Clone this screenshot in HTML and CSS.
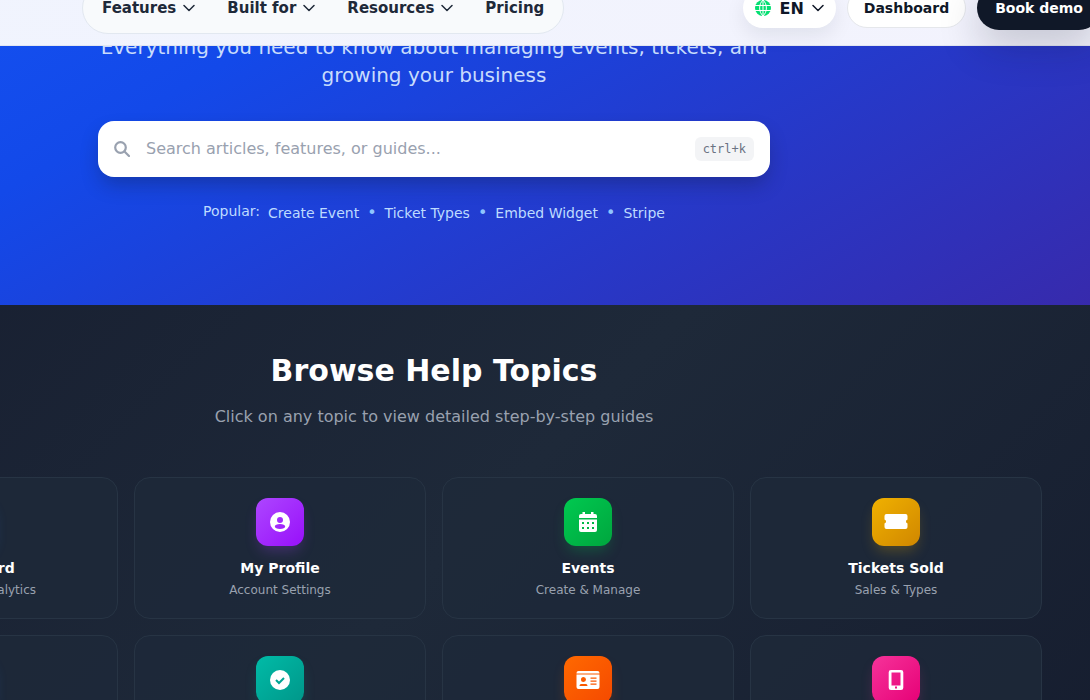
FILE: index.html
```html
<!DOCTYPE html>
<html lang="en">
<head>
    <meta charset="UTF-8">
    <meta name="viewport" content="width=device-width, initial-scale=1.0">
    <title>Help Center</title>
    <link rel="stylesheet" href="styles.css">
</head>
<body>
    <div class="page">
        <header class="header">
            <nav class="nav">
                <button type="button" class="nav-item">Features
                    <svg class="chevron" viewBox="0 0 12 12"><path d="M1 3.5l5 5 5-5"/></svg>
                </button>
                <button type="button" class="nav-item">Built for
                    <svg class="chevron" viewBox="0 0 12 12"><path d="M1 3.5l5 5 5-5"/></svg>
                </button>
                <button type="button" class="nav-item">Resources
                    <svg class="chevron" viewBox="0 0 12 12"><path d="M1 3.5l5 5 5-5"/></svg>
                </button>
                <a href="#" class="nav-item">Pricing</a>
            </nav>
            <div class="actions">
                <button type="button" class="lang-button">
                    <svg class="globe" viewBox="0 0 16 16">
                        <circle cx="8" cy="8" r="8" fill="#05df72"/>
                        <path d="M8 0v16M0 5.500h16M0 10.500h16M8 0C3.500 4 3.500 12 8 16M8 0c4.500 4 4.500 12 0 16" fill="none" stroke="#fff"/>
                    </svg>
                    EN
                    <svg class="chevron" viewBox="0 0 12 12"><path d="M1 3.500l5 5 5-5"/></svg>
                </button>
                <a href="#" class="dashboard-link">Dashboard</a>
                <a href="#" class="demo-link">Book demo</a>
            </div>
        </header>

        <section class="hero">
            <div class="hero-content">
                <p class="hero-text">Everything you need to know about managing events, tickets, and growing your business</p>
                <div class="search">
                    <svg class="search-icon" viewBox="0 0 16 16"><circle cx="6.500" cy="6.500" r="5.300"/><path d="M10.500 10.500l4.500 4.500"/></svg>
                    <input type="text" class="search-input" aria-label="Search" placeholder="Search articles, features, or guides...">
                    <kbd class="shortcut">ctrl+k</kbd>
                </div>
                <div class="popular">
                    <span class="popular-label">Popular:</span>
                    <div class="popular-links">
                        <a href="#">Create Event</a>
                        <span class="dot">•</span>
                        <a href="#">Ticket Types</a>
                        <span class="dot">•</span>
                        <a href="#">Embed Widget</a>
                        <span class="dot">•</span>
                        <a href="#">Stripe</a>
                    </div>
                </div>
            </div>
        </section>

        <section class="topics">
            <div class="container">
                <h2>Browse Help Topics</h2>
                <p class="topics-text">Click on any topic to view detailed step-by-step guides</p>
                <div class="grid">
                    <button type="button" class="card">
                        <span class="icon blue"></span>
                        <span class="card-title">Dashboard</span>
                        <span class="card-text">Overview &amp; Analytics</span>
                    </button>
                    <button type="button" class="card">
                        <span class="icon purple">
                            <svg viewBox="0 0 24 24"><path fill-rule="evenodd" d="M12 2a10 10 0 1 0 0 20 10 10 0 0 0 0-20zM12 7a3 3 0 1 1 0 6 3 3 0 0 1 0-6zM12 14c3 0 5.200 1 5.200 2.500S15 19 12 19s-5.200-1-5.200-2.500S9 14 12 14z"/></svg>
                        </span>
                        <span class="card-title">My Profile</span>
                        <span class="card-text">Account Settings</span>
                    </button>
                    <button type="button" class="card">
                        <span class="icon green">
                            <svg viewBox="0 0 24 24"><path fill-rule="evenodd" d="M6.500 2h2.500v2h6V2h2.500v2H19a2 2 0 0 1 2 2v2H3V6a2 2 0 0 1 2-2h1.500zM3 9.500h18V20a2 2 0 0 1-2 2H5a2 2 0 0 1-2-2zM6 12v2h2v-2zM11 12v2h2v-2zM16 12v2h2v-2zM6 17v2h2v-2zM11 17v2h2v-2zM16 17v2h2v-2z"/></svg>
                        </span>
                        <span class="card-title">Events</span>
                        <span class="card-text">Create &amp; Manage</span>
                    </button>
                    <button type="button" class="card">
                        <span class="icon yellow">
                            <svg viewBox="0 0 24 24"><path d="M2.500 4h19A2 2 0 0 1 23.500 6v3.500c-1 .5-1.500 1-1.500 2s.5 1.500 1.500 2V17a2 2 0 0 1-2 2h-19a2 2 0 0 1-2-2v-3.500c1-.5 1.500-1 1.500-2s-.5-1.500-1.500-2V6a2 2 0 0 1 2-2z"/></svg>
                        </span>
                        <span class="card-title">Tickets Sold</span>
                        <span class="card-text">Sales &amp; Types</span>
                    </button>
                    <button type="button" class="card" aria-label="Topic">
                        <span class="icon blue"></span>
                    </button>
                    <button type="button" class="card" aria-label="Check-in">
                        <span class="icon teal">
                            <svg viewBox="0 0 24 24"><circle cx="12" cy="12" r="10"/><path class="tick" d="M8 12l3 3 5-5"/></svg>
                        </span>
                    </button>
                    <button type="button" class="card" aria-label="Badges">
                        <span class="icon orange">
                            <svg viewBox="0 0 24 24"><path fill-rule="evenodd" d="M2.500 3h19a2 2 0 0 1 2 2v.5H.5V5a2 2 0 0 1 2-2zM.5 6.500h23V19a2 2 0 0 1-2 2h-19a2 2 0 0 1-2-2zM7.500 9a2.500 2.500 0 1 0 0 5 2.500 2.500 0 0 0 0-5zM3.500 18h8c0-1.500-1-2-2-2h-4c-1 0-2 .5-2 2zM14.500 9.500v1.200h6V9.500zM14.500 12.500v1.200h6v-1.200zM14.500 15.500v1.200h6v-1.200z"/></svg>
                        </span>
                    </button>
                    <button type="button" class="card" aria-label="Mobile">
                        <span class="icon pink">
                            <svg viewBox="0 0 24 24"><path fill-rule="evenodd" d="M7 2h10a2.300 2.300 0 0 1 2.300 2.300v15.400a2.300 2.300 0 0 1-2.300 2.300H7a2.300 2.300 0 0 1-2.300-2.300V4.300A2.300 2.300 0 0 1 7 2zM7.500 4.500v13h9v-13zM11 18.500v2h2v-2z"/></svg>
                        </span>
                    </button>
                </div>
            </div>
        </section>
    </div>
</body>
</html>
```
FILE: styles.css
```css
* {
    box-sizing: border-box;
}
body {
    margin: 0;
    height: 100vh;
    overflow: hidden;
    font-family: "DejaVu Sans", sans-serif;
    background-color: #1a2133;
}
a {
    color: inherit;
    text-decoration: none;
}
button {
    font-family: inherit;
    cursor: pointer;
}
h2, p {
    margin: 0;
}
.page {
    position: relative;
    width: calc(100% + 310px);
    margin: -30px 0 0 -266px;
}

/* Header */
.header {
    position: absolute;
    z-index: 10;
    top: 0;
    left: 0;
    right: 0;
    display: flex;
    align-items: center;
    justify-content: space-between;
    padding: 12px 33px 11px 348px;
    background: linear-gradient(to right, #f0f4fe, #f3f3fd);
    border-bottom: 1px solid #e2e6f0;
}
.nav {
    display: flex;
    gap: 4px;
    padding: 5px;
    border: 1px solid #e2e8f0;
    border-radius: 26px;
    background-color: #f8fafc;
}
.nav-item {
    display: flex;
    align-items: center;
    gap: 7px;
    height: 40px;
    padding: 0 14px;
    border: none;
    background: none;
    color: #1e2939;
    font-size: 15px;
    font-weight: bold;
}
.chevron {
    width: 12px;
    height: 12px;
    fill: none;
    stroke: currentColor;
    stroke-width: 1.5;
    stroke-linecap: round;
    stroke-linejoin: round;
}
.actions {
    display: flex;
    align-items: center;
    gap: 11px;
    color: #101828;
    font-weight: bold;
    white-space: nowrap;
}
.lang-button {
    display: flex;
    align-items: center;
    gap: 8px;
    height: 40px;
    padding: 0 12px;
    border: none;
    border-radius: 20px;
    background-color: #fff;
    color: #101828;
    font-size: 16px;
    font-weight: bold;
    box-shadow: 0 8px 20px rgba(16, 24, 40, 0.08);
}
.globe {
    width: 16px;
    height: 16px;
}
.dashboard-link {
    padding: 8px 16px;
    border: 1px solid #e5e7eb;
    border-radius: 20px;
    background-color: #fff;
    font-size: 14px;
    line-height: 22px;
}
.demo-link {
    padding: 11px 18px;
    border-radius: 22px;
    background-color: #101828;
    color: #fff;
    font-size: 14px;
    font-weight: 900;
    line-height: 22px;
    box-shadow: 0 16px 40px rgba(16, 24, 40, 0.22);
}

/* Hero */
.hero {
    padding: 63px 32px 82px;
    background: linear-gradient(150deg, #155dfc -20%, #1349e9 33%, #372aac 98%);
    color: #bedbff;
}
.hero-content {
    max-width: 672px;
    margin: 0 auto;
}
.hero-text {
    color: #c8dcfc;
    font-size: 20px;
    line-height: 28px;
    text-align: center;
}
.search {
    display: flex;
    align-items: center;
    gap: 16px;
    height: 56px;
    margin: 32px 0 24px;
    padding: 0 16px;
    border-radius: 16px;
    background-color: #fff;
    box-shadow: 0 10px 20px -3px rgba(16, 24, 40, 0.3);
}
.search-icon {
    width: 16px;
    height: 16px;
    fill: none;
    stroke: #99a1af;
    stroke-width: 2.2;
    stroke-linecap: round;
}
.search-input {
    flex: 1;
    min-width: 0;
    padding: 0 0 2px;
    border: none;
    outline: none;
    color: #101828;
    font-family: inherit;
    font-size: 16px;
}
.search-input::placeholder {
    color: #99a1af;
}
.shortcut {
    padding: 4px 8px;
    border-radius: 6px;
    background-color: #f3f4f6;
    color: #6a7282;
    font-family: "DejaVu Sans Mono", monospace;
    font-size: 12px;
    line-height: 16px;
}
.popular,
.popular-links {
    display: flex;
    justify-content: center;
    gap: 8px;
}
.popular {
    font-size: 14px;
    line-height: 20px;
}
.popular-links {
    padding-top: 2px;
}
.dot {
    color: #8ec5ff;
    font-size: 16px;
}

/* Topics */
.topics {
    padding: 48px 0;
    background: linear-gradient(135deg, #171e30, #1e2939 50%, #151c2e);
}
.container {
    max-width: 1280px;
    margin: 0 auto;
    padding: 0 32px;
}
.topics h2 {
    color: #fff;
    font-size: 30px;
    line-height: 36px;
    text-align: center;
}
.topics-text {
    margin: 16px 0 48px;
    color: #99a1af;
    font-size: 16px;
    line-height: 24px;
    text-align: center;
}
.grid {
    display: grid;
    grid-template-columns: repeat(4, 1fr);
    gap: 16px;
}
.card {
    display: flex;
    flex-direction: column;
    align-items: center;
    min-height: 142px;
    padding: 20px;
    border: 1px solid #273444;
    border-radius: 16px;
    background-color: rgba(30, 41, 57, 0.8);
}
.icon {
    display: flex;
    align-items: center;
    justify-content: center;
    width: 48px;
    height: 48px;
    margin-bottom: 12px;
    border-radius: 12px;
}
.icon svg {
    width: 24px;
    height: 24px;
    fill: #fff;
}
.icon .tick {
    fill: none;
    stroke: #00a594;
    stroke-width: 2;
}
.card-title {
    margin-bottom: 4px;
    color: #fff;
    font-size: 14px;
    font-weight: bold;
    line-height: 20px;
}
.card-text {
    color: #99a1af;
    font-size: 12px;
    line-height: 16px;
}
.blue {
    background: linear-gradient(135deg, #2b7fff, #155dfc);
    box-shadow: 0 8px 14px -3px rgba(43, 127, 255, 0.25);
}
.purple {
    background: linear-gradient(135deg, #ad46ff, #9810fa);
    box-shadow: 0 8px 14px -3px rgba(173, 70, 255, 0.25);
}
.green {
    background: linear-gradient(135deg, #00c950, #00a63e);
    box-shadow: 0 8px 14px -3px rgba(0, 201, 80, 0.25);
}
.yellow {
    background: linear-gradient(135deg, #f0b100, #d08700);
    box-shadow: 0 8px 14px -3px rgba(240, 177, 0, 0.25);
}
.teal {
    background: linear-gradient(135deg, #00bba7, #009689);
    box-shadow: 0 8px 14px -3px rgba(0, 187, 167, 0.25);
}
.orange {
    background: linear-gradient(135deg, #ff6900, #f54900);
    box-shadow: 0 8px 14px -3px rgba(255, 105, 0, 0.25);
}
.pink {
    background: linear-gradient(135deg, #f6339a, #e60076);
    box-shadow: 0 8px 14px -3px rgba(246, 51, 154, 0.25);
}
```
